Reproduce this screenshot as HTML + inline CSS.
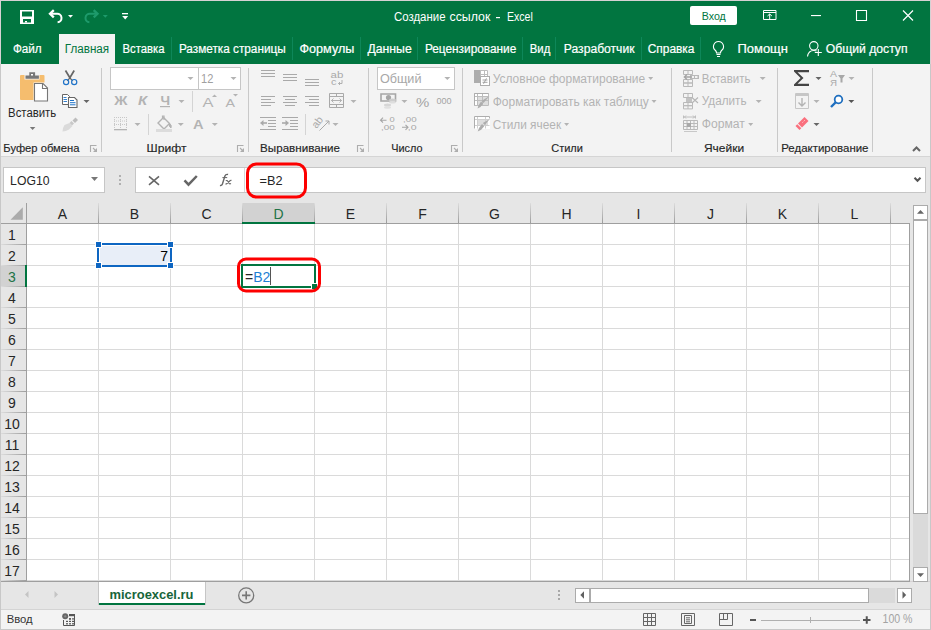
<!DOCTYPE html>
<html><head><meta charset="utf-8"><style>
html,body{margin:0;padding:0;width:931px;height:630px;overflow:hidden;background:#d6d2d4}
svg{display:block;font-family:"Liberation Sans", sans-serif}
</style></head><body>
<svg width="931" height="630" viewBox="0 0 931 630">
<defs><linearGradient id="gv" x1="0" y1="0" x2="0" y2="1"><stop offset="0" stop-color="#dcdcdc"/><stop offset="1" stop-color="#9c9c9c"/></linearGradient><linearGradient id="gh" x1="0" y1="0" x2="1" y2="0"><stop offset="0" stop-color="#dcdcdc"/><stop offset="1" stop-color="#9c9c9c"/></linearGradient></defs>
<rect x="0" y="0" width="931" height="630" fill="#d6d2d4" />
<rect x="0" y="64" width="1" height="566" fill="#c8c8c8" />
<rect x="930" y="64" width="1" height="566" fill="#c8c8c8" />
<rect x="0" y="629" width="931" height="1" fill="#c8c8c8" />
<rect x="1" y="1" width="929" height="63" fill="#017540" />
<rect x="20" y="10" width="14" height="14" fill="#fff" />
<rect x="22" y="11.5" width="10" height="5" fill="#017540" />
<rect x="23" y="19" width="8" height="3.5" fill="#017540" />
<rect x="25" y="21" width="2" height="1.5" fill="#fff" />
<path d="M50.5 13.8h6.5a4.2 4.2 0 0 1 0.6 8.4" fill="none" stroke="#fff" stroke-width="2" />
<path d="M53.8 10.2l-3.8 3.6 3.8 3.6" fill="none" stroke="#fff" stroke-width="2.3" />
<path d="M68.0 14.9L73.0 14.9L70.5 17.7Z" fill="#fff" stroke="none" stroke-width="1" />
<path d="M97 13.8h-7a4.2 4.2 0 0 0-0.6 8.4" fill="none" stroke="#1e9a6b" stroke-width="2" />
<path d="M93.7 10.2l3.8 3.6-3.8 3.6" fill="none" stroke="#1e9a6b" stroke-width="2.3" />
<path d="M102.8 14.9L107.8 14.9L105.3 17.7Z" fill="#1e9a6b" stroke="none" stroke-width="1" />
<rect x="122" y="13" width="6" height="1.3" fill="#fff" />
<path d="M122.2 16.1L128.2 16.1L125.2 19.5Z" fill="#fff" stroke="none" stroke-width="1" />
<text x="394.0" y="20.8" font-size="12" fill="#fff" font-weight="normal" textLength="51.5" lengthAdjust="spacingAndGlyphs" >Создание</text>
<text x="449.5" y="20.8" font-size="12" fill="#fff" font-weight="normal" textLength="40.80000000000001" lengthAdjust="spacingAndGlyphs" >ссылок</text>
<rect x="496" y="17" width="4" height="1.2" fill="#fff" />
<text x="507.0" y="20.8" font-size="12" fill="#fff" font-weight="normal" textLength="25.799999999999955" lengthAdjust="spacingAndGlyphs" >Excel</text>
<rect x="690" y="6" width="47" height="19" fill="#fff" rx="2"/>
<text x="701.8" y="20.3" font-size="11.5" fill="#017540" font-weight="normal" textLength="24.0" lengthAdjust="spacingAndGlyphs" >Вход</text>
<path d="M763.5 10.5h12.5v9h-12.5z M763.5 12.5h12.5" fill="none" stroke="#fff" stroke-width="1" />
<path d="M769.7 19.5v-5.5 M767.5 16l2.2-2 2.2 2" fill="none" stroke="#fff" stroke-width="1" />
<rect x="811" y="15" width="10" height="1.1" fill="#fff" />
<path d="M856.5 10.5h10v10h-10z" fill="none" stroke="#fff" stroke-width="1.1" />
<path d="M903 10.5l10 10 M913 10.5l-10 10" fill="none" stroke="#fff" stroke-width="1.2" />
<rect x="59" y="34" width="56" height="31" fill="#f3f3f3" />
<text x="12.9" y="53" font-size="12" fill="#fff" font-weight="normal" textLength="28.800000000000004" lengthAdjust="spacingAndGlyphs" stroke="#fff" stroke-width="0.2">Файл</text>
<text x="64.8" y="53" font-size="12" fill="#017540" font-weight="normal" textLength="44.3" lengthAdjust="spacingAndGlyphs" >Главная</text>
<text x="122.5" y="53" font-size="12" fill="#fff" font-weight="normal" textLength="42" lengthAdjust="spacingAndGlyphs" stroke="#fff" stroke-width="0.2">Вставка</text>
<text x="178.9" y="53" font-size="12" fill="#fff" font-weight="normal" textLength="106.79999999999998" lengthAdjust="spacingAndGlyphs" stroke="#fff" stroke-width="0.2">Разметка страницы</text>
<text x="299.5" y="53" font-size="12" fill="#fff" font-weight="normal" textLength="54.80000000000001" lengthAdjust="spacingAndGlyphs" stroke="#fff" stroke-width="0.2">Формулы</text>
<text x="367.5" y="53" font-size="12" fill="#fff" font-weight="normal" textLength="44.19999999999999" lengthAdjust="spacingAndGlyphs" stroke="#fff" stroke-width="0.2">Данные</text>
<text x="424.9" y="53" font-size="12" fill="#fff" font-weight="normal" textLength="91.39999999999998" lengthAdjust="spacingAndGlyphs" stroke="#fff" stroke-width="0.2">Рецензирование</text>
<text x="529.8" y="53" font-size="12" fill="#fff" font-weight="normal" textLength="20.5" lengthAdjust="spacingAndGlyphs" stroke="#fff" stroke-width="0.2">Вид</text>
<text x="563.8" y="53" font-size="12" fill="#fff" font-weight="normal" textLength="70.70000000000005" lengthAdjust="spacingAndGlyphs" stroke="#fff" stroke-width="0.2">Разработчик</text>
<text x="647.7" y="53" font-size="12" fill="#fff" font-weight="normal" textLength="46.799999999999955" lengthAdjust="spacingAndGlyphs" stroke="#fff" stroke-width="0.2">Справка</text>
<text x="737.5" y="53" font-size="12" fill="#fff" font-weight="normal" textLength="50.39999999999998" lengthAdjust="spacingAndGlyphs" stroke="#fff" stroke-width="0.2">Помощн</text>
<text x="825.8" y="53" font-size="12" fill="#fff" font-weight="normal" textLength="81.70000000000005" lengthAdjust="spacingAndGlyphs" stroke="#fff" stroke-width="0.2">Общий доступ</text>
<rect x="171" y="37" width="1" height="23" fill="#0e8759" />
<rect x="292" y="37" width="1" height="23" fill="#0e8759" />
<rect x="360" y="37" width="1" height="23" fill="#0e8759" />
<rect x="417" y="37" width="1" height="23" fill="#0e8759" />
<rect x="522" y="37" width="1" height="23" fill="#0e8759" />
<rect x="555" y="37" width="1" height="23" fill="#0e8759" />
<rect x="641" y="37" width="1" height="23" fill="#0e8759" />
<rect x="700" y="37" width="1" height="23" fill="#0e8759" />
<path d="M718.5 41.5a5 5 0 0 0-3 9c1 1 1 2 1 2.5h4c0-0.5 0-1.5 1-2.5a5 5 0 0 0-3-9z M716.5 54.5h4 M717 56.5h3" fill="none" stroke="#fff" stroke-width="1.1" />
<circle cx="813.8" cy="45.8" r="4.2" fill="none" stroke="#fff" stroke-width="1.1"/>
<path d="M807.5 56.5c0.5-3.5 3-6 6.3-6 1.2 0 2 0.2 2.8 0.6" fill="none" stroke="#fff" stroke-width="1.1" />
<path d="M814.8 52.5h7 M818.3 49v7" fill="none" stroke="#fff" stroke-width="1.1" />
<rect x="1" y="64" width="929" height="92" fill="#f3f3f3" />
<rect x="1" y="156" width="929" height="1" fill="#d5d5d5" />
<rect x="101" y="68" width="1" height="84" fill="#c9c9c9" />
<rect x="248" y="68" width="1" height="84" fill="#c9c9c9" />
<rect x="368" y="68" width="1" height="84" fill="#c9c9c9" />
<rect x="462" y="68" width="1" height="84" fill="#c9c9c9" />
<rect x="671" y="68" width="1" height="84" fill="#c9c9c9" />
<rect x="777" y="68" width="1" height="84" fill="#c9c9c9" />
<rect x="872" y="68" width="1" height="84" fill="#c9c9c9" />
<text x="3.3" y="152" font-size="11.3" fill="#262626" font-weight="normal" textLength="76.2" lengthAdjust="spacingAndGlyphs" stroke="#262626" stroke-width="0.15">Буфер обмена</text>
<text x="146.5" y="152" font-size="11.3" fill="#262626" font-weight="normal" textLength="40" lengthAdjust="spacingAndGlyphs" stroke="#262626" stroke-width="0.15">Шрифт</text>
<text x="260.1" y="152" font-size="11.3" fill="#262626" font-weight="normal" textLength="79.89999999999998" lengthAdjust="spacingAndGlyphs" stroke="#262626" stroke-width="0.15">Выравнивание</text>
<text x="391.2" y="152" font-size="11.3" fill="#262626" font-weight="normal" textLength="31.30000000000001" lengthAdjust="spacingAndGlyphs" stroke="#262626" stroke-width="0.15">Число</text>
<text x="551.2" y="152" font-size="11.3" fill="#262626" font-weight="normal" textLength="31.699999999999932" lengthAdjust="spacingAndGlyphs" stroke="#262626" stroke-width="0.15">Стили</text>
<text x="703.9" y="152" font-size="11.3" fill="#262626" font-weight="normal" textLength="40.200000000000045" lengthAdjust="spacingAndGlyphs" stroke="#262626" stroke-width="0.15">Ячейки</text>
<text x="781.2" y="152" font-size="11.3" fill="#262626" font-weight="normal" textLength="87.29999999999995" lengthAdjust="spacingAndGlyphs" stroke="#262626" stroke-width="0.15">Редактирование</text>
<path d="M90.5 152v-6.5h6" fill="none" stroke="#adadad" stroke-width="1.1" />
<path d="M93 148l3.5 3.5" fill="none" stroke="#adadad" stroke-width="1.1" />
<path d="M97 148v4h-4z" fill="#adadad" stroke="none" stroke-width="1" />
<path d="M237.5 152v-6.5h6" fill="none" stroke="#adadad" stroke-width="1.1" />
<path d="M240 148l3.5 3.5" fill="none" stroke="#adadad" stroke-width="1.1" />
<path d="M244 148v4h-4z" fill="#adadad" stroke="none" stroke-width="1" />
<path d="M357.5 152v-6.5h6" fill="none" stroke="#adadad" stroke-width="1.1" />
<path d="M360 148l3.5 3.5" fill="none" stroke="#adadad" stroke-width="1.1" />
<path d="M364 148v4h-4z" fill="#adadad" stroke="none" stroke-width="1" />
<path d="M451.5 152v-6.5h6" fill="none" stroke="#adadad" stroke-width="1.1" />
<path d="M454 148l3.5 3.5" fill="none" stroke="#adadad" stroke-width="1.1" />
<path d="M458 148v4h-4z" fill="#adadad" stroke="none" stroke-width="1" />
<path d="M913 151l3.5-3.5 3.5 3.5" fill="none" stroke="#666" stroke-width="2" />
<rect x="20" y="75" width="24.5" height="25" fill="#f5bd6e" rx="1"/>
<rect x="24.5" y="74" width="15" height="5.5" fill="#f3f3f3" />
<path d="M25.5 75.5h3.8v-3.3h5.8v3.3h3.8v3.3h-13.4z" fill="#777" stroke="none" stroke-width="1" />
<rect x="31" y="74" width="2" height="1.5" fill="#fff" />
<rect x="33.5" y="82.5" width="15" height="19.5" fill="#f3f3f3" />
<path d="M34.5 83.5h8.5l4.5 4.5v13h-13z" fill="#fff" stroke="#777" stroke-width="1.1" />
<path d="M42.5 83.5v5h5" fill="none" stroke="#777" stroke-width="1.1" />
<text x="8.1" y="117" font-size="12" fill="#262626" font-weight="normal" textLength="48.1" lengthAdjust="spacingAndGlyphs" >Вставить</text>
<path d="M29.85 127.0L35.35 127.0L32.6 130.0Z" fill="#777" stroke="none" stroke-width="1" />
<path d="M65.5 70.5l3 5 1.5 2.5 M74.2 70.5l-3 5-1.5 2.5" fill="none" stroke="#666" stroke-width="1.7" />
<path d="M69.9 78l-2.8 2.8 M69.9 78l2.8 2.8" fill="none" stroke="#666" stroke-width="1.2" />
<circle cx="66.1" cy="82.1" r="2.6" fill="none" stroke="#1f73c8" stroke-width="1.2"/>
<circle cx="74.2" cy="82.1" r="2.6" fill="none" stroke="#1f73c8" stroke-width="1.2"/>
<path d="M62.5 94.5h5l2 2v8h-7z" fill="#fff" stroke="#666" stroke-width="1" />
<path d="M68.5 97.5h6l2.5 2.5v7.5h-8.5z" fill="#fff" stroke="#666" stroke-width="1.1" />
<path d="M63.5 97.5h3 M63.5 99.5h3.5 M63.5 101.5h3.5" fill="none" stroke="#1f73c8" stroke-width="0.9" />
<path d="M70 100.5h4 M70 102.7h5.5 M70 104.8h5.5" fill="none" stroke="#1f73c8" stroke-width="1" />
<path d="M83.5 99.9L89.5 99.9L86.5 103.1Z" fill="#666" stroke="none" stroke-width="1" />
<path d="M72.5 120.5l3-3 2.5 2.5-3 3z" fill="#bdbdbd" stroke="none" stroke-width="1" />
<path d="M71.5 121l2.5 2.5-2 2-2.5-2.5z" fill="#c8c8c8" stroke="none" stroke-width="1" />
<path d="M69.5 123l3 3-3.5 3.5q-3 2-6.5 2q0-3.5 2-6.5z" fill="#dadada" stroke="none" stroke-width="1" />
<rect x="110" y="67" width="88" height="22" fill="#fff" stroke="#c6c6c6" stroke-width="1" transform="translate(0.5 0.5)"/>
<rect x="198" y="67" width="42" height="22" fill="#fff" stroke="#c6c6c6" stroke-width="1" transform="translate(0.5 0.5)"/>
<path d="M187.5 76.9L193.5 76.9L190.5 80.1Z" fill="#b3b3b3" stroke="none" stroke-width="1" />
<path d="M230.5 76.9L236.5 76.9L233.5 80.1Z" fill="#b3b3b3" stroke="none" stroke-width="1" />
<text x="201.0" y="83" font-size="12" fill="#a0a0a0" font-weight="normal" textLength="12.300000000000011" lengthAdjust="spacingAndGlyphs" >12</text>
<text x="114.3" y="104.8" font-size="12" fill="#b3b3b3" font-weight="bold" textLength="13.200000000000003" lengthAdjust="spacingAndGlyphs" >Ж</text>
<text x="138.0" y="104.8" font-size="12" fill="#b3b3b3" font-weight="bold" textLength="9.199999999999989" lengthAdjust="spacingAndGlyphs" font-style="italic">К</text>
<text x="160.5" y="104.8" font-size="12" fill="#b3b3b3" font-weight="bold" textLength="9.599999999999994" lengthAdjust="spacingAndGlyphs" >Ч</text>
<rect x="160" y="106" width="10" height="1.2" fill="#b3b3b3" />
<path d="M178.5 99.9L184.5 99.9L181.5 103.1Z" fill="#b3b3b3" stroke="none" stroke-width="1" />
<rect x="192" y="91" width="1" height="21" fill="#d4d4d4" />
<text x="202.5" y="107" font-size="13.5" fill="#b3b3b3" font-weight="normal" textLength="11" lengthAdjust="spacingAndGlyphs" >A</text>
<path d="M212 97l2.5-2.5 2.5 2.5z" fill="#b3b3b3" stroke="none" stroke-width="1" />
<text x="225.5" y="107" font-size="11" fill="#b3b3b3" font-weight="normal" textLength="9.5" lengthAdjust="spacingAndGlyphs" >A</text>
<path d="M233 94h5l-2.5 2.5z" fill="#b3b3b3" stroke="none" stroke-width="1" />
<path d="M114 117.5h13 M114 121h13 M114 124.5h13 M114.5 117v11 M120.5 117v11 M126.5 117v11" fill="none" stroke="#c8c8c8" stroke-width="1" stroke-dasharray="1 1"/>
<rect x="114" y="129" width="13" height="1.3" fill="#b3b3b3" />
<path d="M134.5 122.9L140.5 122.9L137.5 126.1Z" fill="#b3b3b3" stroke="none" stroke-width="1" />
<rect x="148" y="114" width="1" height="21" fill="#d4d4d4" />
<path d="M158 123l5.5-5.5 6 6-5.5 5.5z" fill="none" stroke="#b3b3b3" stroke-width="1.4" />
<path d="M162.5 118.5v-2.5h1.5v4" fill="none" stroke="#b3b3b3" stroke-width="1.2" />
<path d="M169.5 123.5q2.5 1.5 1.5 4.5l-1.5-1.5z" fill="#b3b3b3" stroke="#b3b3b3" stroke-width="1" />
<rect x="156" y="129" width="16" height="3" fill="#dcdcdc" />
<path d="M177.8 122.9L183.8 122.9L180.8 126.1Z" fill="#b3b3b3" stroke="none" stroke-width="1" />
<text x="192.9" y="128.5" font-size="13.5" fill="#b3b3b3" font-weight="bold" textLength="10.599999999999994" lengthAdjust="spacingAndGlyphs" >A</text>
<path d="M211.8 122.9L217.8 122.9L214.8 126.1Z" fill="#b3b3b3" stroke="none" stroke-width="1" />
<rect x="261" y="70" width="14" height="1" fill="#a9a9a9" />
<rect x="261" y="73" width="14" height="1" fill="#a9a9a9" />
<rect x="261" y="76" width="14" height="1" fill="#a9a9a9" />
<rect x="283" y="74" width="14" height="1" fill="#a9a9a9" />
<rect x="283" y="77" width="14" height="1" fill="#a9a9a9" />
<rect x="283" y="80" width="14" height="1" fill="#a9a9a9" />
<rect x="305" y="79" width="14" height="1" fill="#a9a9a9" />
<rect x="305" y="82" width="14" height="1" fill="#a9a9a9" />
<rect x="305" y="85" width="14" height="1" fill="#a9a9a9" />
<text x="330.5" y="77.8" font-size="9.5" fill="#a9a9a9" font-weight="normal" textLength="12.800000000000011" lengthAdjust="spacingAndGlyphs" >ab</text>
<text x="330.9" y="85" font-size="9.5" fill="#a9a9a9" font-weight="normal" textLength="5.5" lengthAdjust="spacingAndGlyphs" >c</text>
<path d="M342 80v3.5h-3.5 M340 82l-1.5 1.5 1.5 1.5" fill="none" stroke="#a9a9a9" stroke-width="0.9" />
<rect x="261" y="96" width="14" height="1" fill="#a9a9a9" />
<rect x="283" y="96" width="14" height="1" fill="#a9a9a9" />
<rect x="305" y="96" width="14" height="1" fill="#a9a9a9" />
<rect x="261" y="99" width="10" height="1" fill="#a9a9a9" />
<rect x="285" y="99" width="10" height="1" fill="#a9a9a9" />
<rect x="309" y="99" width="10" height="1" fill="#a9a9a9" />
<rect x="261" y="102" width="14" height="1" fill="#a9a9a9" />
<rect x="283" y="102" width="14" height="1" fill="#a9a9a9" />
<rect x="305" y="102" width="14" height="1" fill="#a9a9a9" />
<rect x="261" y="105" width="10" height="1" fill="#a9a9a9" />
<rect x="285" y="105" width="10" height="1" fill="#a9a9a9" />
<rect x="309" y="105" width="10" height="1" fill="#a9a9a9" />
<path d="M329.5 93.5h14v14h-14z M329.5 96.5h14 M329.5 104.5h14 M336.5 93.5v3 M336.5 104.5v3" fill="none" stroke="#a9a9a9" stroke-width="1" />
<path d="M331.5 100.5h10 M333.5 98.5l-2 2 2 2 M339.5 98.5l2 2-2 2" fill="none" stroke="#a9a9a9" stroke-width="0.9" />
<path d="M350.5 99.9L356.5 99.9L353.5 103.1Z" fill="#b3b3b3" stroke="none" stroke-width="1" />
<rect x="260" y="117" width="16" height="1" fill="#a9a9a9" />
<rect x="260" y="129" width="16" height="1" fill="#a9a9a9" />
<rect x="268" y="120" width="8" height="1" fill="#a9a9a9" />
<rect x="268" y="123" width="8" height="1" fill="#a9a9a9" />
<rect x="268" y="126" width="8" height="1" fill="#a9a9a9" />
<path d="M267 123h-5" fill="none" stroke="#a9a9a9" stroke-width="1.6" />
<path d="M263.5 120l-3.5 3 3.5 3z" fill="#a9a9a9" stroke="none" stroke-width="1" />
<rect x="282" y="117" width="16" height="1" fill="#a9a9a9" />
<rect x="282" y="129" width="16" height="1" fill="#a9a9a9" />
<rect x="290" y="120" width="8" height="1" fill="#a9a9a9" />
<rect x="290" y="123" width="8" height="1" fill="#a9a9a9" />
<rect x="290" y="126" width="8" height="1" fill="#a9a9a9" />
<path d="M282 123h5" fill="none" stroke="#a9a9a9" stroke-width="1.6" />
<path d="M285.5 120l3.5 3-3.5 3z" fill="#a9a9a9" stroke="none" stroke-width="1" />
<rect x="305" y="114" width="1" height="21" fill="#d4d4d4" />
<text x="0" y="0" font-size="10.5" fill="#a9a9a9" transform="translate(316.5 129) rotate(-52)">ab</text>
<path d="M319.5 130.5l9.5-9.5 M325.5 121h3.5v3.5" fill="none" stroke="#a9a9a9" stroke-width="1" />
<path d="M332.5 122.9L338.5 122.9L335.5 126.1Z" fill="#b3b3b3" stroke="none" stroke-width="1" />
<rect x="377" y="67" width="77" height="22" fill="#fff" stroke="#c6c6c6" stroke-width="1" transform="translate(0.5 0.5)"/>
<text x="379.9" y="83" font-size="12" fill="#a8a8a8" font-weight="normal" textLength="41.60000000000002" lengthAdjust="spacingAndGlyphs" >Общий</text>
<path d="M444.3 76.9L450.3 76.9L447.3 80.1Z" fill="#b3b3b3" stroke="none" stroke-width="1" />
<path d="M381 94h14.5v7h-14.5z" fill="none" stroke="#a6a6a6" stroke-width="1.6" />
<circle cx="388.5" cy="97.5" r="2.6" fill="#a6a6a6"/>
<ellipse cx="392.5" cy="100" rx="3.5" ry="1.6" fill="#cdcdcd"/>
<ellipse cx="392.5" cy="102.3" rx="3.5" ry="1.2" fill="#dedede"/>
<ellipse cx="387.5" cy="105" rx="3.5" ry="1.5" fill="#d6d6d6"/>
<ellipse cx="387.5" cy="107.5" rx="3.5" ry="1.2" fill="#e0e0e0"/>
<path d="M401.4 99.9L407.4 99.9L404.4 103.1Z" fill="#b3b3b3" stroke="none" stroke-width="1" />
<text x="416.1" y="107.2" font-size="13.5" fill="#a3a3a3" font-weight="normal" textLength="13.299999999999955" lengthAdjust="spacingAndGlyphs" >%</text>
<text x="436.4" y="104" font-size="9.5" fill="#a3a3a3" font-weight="normal" textLength="15.100000000000023" lengthAdjust="spacingAndGlyphs" >000</text>
<text x="389.5" y="122.2" font-size="7.6" fill="#a6a6a6" font-weight="normal" textLength="5.199999999999989" lengthAdjust="spacingAndGlyphs" >0</text>
<text x="381.0" y="129.6" font-size="7.6" fill="#a6a6a6" font-weight="normal" textLength="13.699999999999989" lengthAdjust="spacingAndGlyphs" >,00</text>
<path d="M380.5 120.2h6 M383 117.7l-2.5 2.5 2.5 2.5" fill="none" stroke="#a6a6a6" stroke-width="1.1" />
<text x="403.0" y="122.2" font-size="7.6" fill="#a6a6a6" font-weight="normal" textLength="13.600000000000023" lengthAdjust="spacingAndGlyphs" >,00</text>
<text x="407.8" y="129.6" font-size="7.6" fill="#a6a6a6" font-weight="normal" textLength="8.800000000000011" lengthAdjust="spacingAndGlyphs" >,0</text>
<path d="M402 127.3h6 M405.5 124.8l2.5 2.5-2.5 2.5" fill="none" stroke="#a6a6a6" stroke-width="1.1" />
<rect x="474" y="70" width="14" height="13" fill="#fff" />
<path d="M474.5 70.5h13v12h-13z M480.5 70.5v12 M474.5 74.5h13 M474.5 78.5h13 M484.5 70.5v6" fill="none" stroke="#bdbdbd" stroke-width="1" />
<rect x="474" y="70" width="6" height="13" fill="#adadad" />
<rect x="480.5" y="76.5" width="9" height="9" fill="#fff" stroke="#adadad" stroke-width="1"/>
<path d="M482.5 80h5 M482.5 82.3h5 M486.5 78.3l-3 5.5" fill="none" stroke="#9a9a9a" stroke-width="0.9" />
<text x="492.7" y="83.4" font-size="12" fill="#b3b3b3" font-weight="normal" textLength="152.50000000000006" lengthAdjust="spacingAndGlyphs" >Условное форматирование</text>
<path d="M648.2 77.0L653.2 77.0L650.7 80.0Z" fill="#b3b3b3" stroke="none" stroke-width="1" />
<rect x="474" y="93" width="15" height="13" fill="#fff" />
<rect x="477" y="96" width="11" height="9" fill="#dedede" />
<path d="M474.5 93.5h14v12h-14z M477.5 93.5v12 M474.5 96.5h14 M474.5 100.5h14 M482.5 93.5v12" fill="none" stroke="#bdbdbd" stroke-width="1" />
<path d="M474.5 105.5v-12h14" fill="none" stroke="#adadad" stroke-width="1" />
<path d="M489.5 96l-6 7-2-2z" fill="#adadad" stroke="none" stroke-width="1" />
<path d="M481 101.5l2 2-2.5 3.5-3 1.5 1-3z" fill="#adadad" stroke="none" stroke-width="1" />
<text x="492.7" y="106" font-size="12" fill="#b3b3b3" font-weight="normal" textLength="156.09999999999997" lengthAdjust="spacingAndGlyphs" >Форматировать как таблицу</text>
<path d="M651.5 100.0L656.5 100.0L654 103.0Z" fill="#b3b3b3" stroke="none" stroke-width="1" />
<rect x="474" y="116" width="16" height="13" fill="#fff" />
<rect x="478" y="119" width="10" height="6" fill="#dedede" />
<path d="M474.5 119.5h15 M474.5 125.5h15 M477.5 116.5v12 M485.5 116.5v12" fill="none" stroke="#cfcfcf" stroke-width="1" />
<path d="M474.5 128.5v-12h15v2" fill="none" stroke="#adadad" stroke-width="1" />
<path d="M489.8 119l-5 6-2-2z" fill="#adadad" stroke="none" stroke-width="1" />
<path d="M482 124l2.2 2.2-3 3.5-3.5 1.8 1.3-3.5z" fill="#adadad" stroke="none" stroke-width="1" />
<text x="492.7" y="128.9" font-size="12" fill="#b3b3b3" font-weight="normal" textLength="68.40000000000003" lengthAdjust="spacingAndGlyphs" >Стили ячеек</text>
<path d="M564.1 123.0L569.1 123.0L566.6 126.0Z" fill="#b3b3b3" stroke="none" stroke-width="1" />
<path d="M683.5 70.5h9.0v4h-9.0z M688.0 70.5v4" fill="none" stroke="#b9b9b9" stroke-width="1" />
<path d="M683.5 79.5h9.0v3.5h-9.0z M688.0 79.5v3.5" fill="none" stroke="#b9b9b9" stroke-width="1" />
<path d="M683.5 83.0h9.0v3.5h-9.0z M688.0 83.0v3.5" fill="none" stroke="#b9b9b9" stroke-width="1" />
<rect x="690" y="75" width="9" height="4" fill="#b9b9b9" />
<rect x="691.5" y="76" width="2.5" height="2" fill="#f3f3f3" />
<rect x="695" y="76" width="2.5" height="2" fill="#f3f3f3" />
<path d="M692 77h-8 M687 74.5l-2.7 2.5 2.7 2.5" fill="none" stroke="#a5a5a5" stroke-width="1.3" />
<text x="701.8" y="82.7" font-size="12" fill="#b3b3b3" font-weight="normal" textLength="48.700000000000045" lengthAdjust="spacingAndGlyphs" >Вставить</text>
<path d="M759.7 76.9L765.7 76.9L762.7 80.1Z" fill="#b3b3b3" stroke="none" stroke-width="1" />
<path d="M683.5 93.5h9.0v4h-9.0z M688.0 93.5v4" fill="none" stroke="#b9b9b9" stroke-width="1" />
<rect x="686" y="98" width="6" height="4" fill="#c2c2c2" />
<path d="M683.5 102.5h9.0v3.2h-9.0z M688.0 102.5v3.2" fill="none" stroke="#b9b9b9" stroke-width="1" />
<path d="M683.5 105.7h9.0v3.2h-9.0z M688.0 105.7v3.2" fill="none" stroke="#b9b9b9" stroke-width="1" />
<path d="M692 97.5l6 5.5 M698 97.5l-6 5.5" fill="none" stroke="#b5b5b5" stroke-width="1.1" />
<text x="701.8" y="105.2" font-size="12" fill="#b3b3b3" font-weight="normal" textLength="44.700000000000045" lengthAdjust="spacingAndGlyphs" >Удалить</text>
<path d="M755.7 99.9L761.7 99.9L758.7 103.1Z" fill="#b3b3b3" stroke="none" stroke-width="1" />
<path d="M683.5 120.5h14v9h-14z M683.5 123.5h14 M683.5 126.5h14 M687 120.5v9 M690.5 120.5v9 M694 120.5v9" fill="none" stroke="#b9b9b9" stroke-width="1" />
<rect x="687" y="123" width="4" height="4" fill="#a9a9a9" />
<path d="M684 131.5h13" fill="none" stroke="#c8c8c8" stroke-width="1" />
<path d="M683.5 115.5v3 M695.5 115.5v3 M684 117h11 M686 115.5l-1.5 1.5 1.5 1.5 M693 115.5l1.5 1.5-1.5 1.5" fill="none" stroke="#b9b9b9" stroke-width="0.9" />
<text x="701.8" y="128.3" font-size="12" fill="#b3b3b3" font-weight="normal" textLength="43.10000000000002" lengthAdjust="spacingAndGlyphs" >Формат</text>
<path d="M748.2 123.0L753.2 123.0L750.7 126.0Z" fill="#b3b3b3" stroke="none" stroke-width="1" />
<path d="M794 70h15v2.2h-11.5l6 5.8-6 5.8h11.5v2.2h-15v-1.6l6.6-6.4-6.6-6.4z" fill="#444" stroke="none" stroke-width="1" />
<path d="M815.5 76.9L821.5 76.9L818.5 80.1Z" fill="#666" stroke="none" stroke-width="1" />
<text x="830.0" y="77" font-size="8.5" fill="#a8a8a8" font-weight="normal" textLength="7.0" lengthAdjust="spacingAndGlyphs" >А</text>
<text x="830.0" y="86" font-size="8.5" fill="#a8a8a8" font-weight="normal" textLength="7.0" lengthAdjust="spacingAndGlyphs" >Я</text>
<path d="M838 75h7l-2.5 3.5v4h-2v-4z" fill="#a8a8a8" stroke="none" stroke-width="1" />
<path d="M848.5 76.9L854.5 76.9L851.5 80.1Z" fill="#b3b3b3" stroke="none" stroke-width="1" />
<path d="M795.5 93.5h13v15h-13z" fill="none" stroke="#c6c6c6" stroke-width="1" />
<rect x="796" y="94" width="12" height="2" fill="#c6c6c6" />
<path d="M802 98v8 M798.5 102.5l3.5 3.5 3.5-3.5" fill="none" stroke="#b3b3b3" stroke-width="1.4" />
<path d="M813.5 99.9L819.5 99.9L816.5 103.1Z" fill="#b3b3b3" stroke="none" stroke-width="1" />
<circle cx="838.5" cy="99.5" r="3.8" fill="#fff" stroke="#1f6fbf" stroke-width="1.8"/>
<path d="M836 102l-5 5" fill="none" stroke="#1f6fbf" stroke-width="2.4" />
<path d="M848.3 99.9L854.3 99.9L851.3 103.1Z" fill="#555" stroke="none" stroke-width="1" />
<path d="M798 123.5l6.5-6.5 4 4-6.5 6.5z" fill="#fa6f7d" stroke="none" stroke-width="1" />
<path d="M802.5 122.5l2.5-2.5" fill="none" stroke="#fff" stroke-width="0.8" stroke-dasharray="1 1"/>
<path d="M795.5 126l1.8-1.8 4 4-1.8 1.8z" fill="#fa6f7d" stroke="none" stroke-width="1" />
<path d="M813.5 122.9L819.5 122.9L816.5 126.1Z" fill="#666" stroke="none" stroke-width="1" />
<rect x="1" y="157" width="929" height="46" fill="#e6e6e6" />
<rect x="3" y="167" width="101" height="25" fill="#fff" stroke="#c6c6c6" stroke-width="1" transform="translate(0.5 0.5)"/>
<text x="10.1" y="185.2" font-size="13" fill="#262626" font-weight="normal" textLength="39.4" lengthAdjust="spacingAndGlyphs" >LOG10</text>
<path d="M91.0 177.0L98.0 177.0L94.5 181.0Z" fill="#777" stroke="none" stroke-width="1" />
<rect x="119" y="175" width="2" height="2" fill="#b0b0b0" />
<rect x="119" y="179" width="2" height="2" fill="#b0b0b0" />
<rect x="119" y="183" width="2" height="2" fill="#b0b0b0" />
<rect x="135" y="167" width="790" height="25" fill="#fff" stroke="#c6c6c6" stroke-width="1" transform="translate(0.5 0.5)"/>
<rect x="244" y="168" width="1" height="24" fill="#d8d8d8" />
<path d="M149 176.3l10 8.6 M159 176.3l-10 8.6" fill="none" stroke="#666" stroke-width="1.6" />
<path d="M184.5 180.3l4 4.3 8.3-8.6" fill="none" stroke="#666" stroke-width="2.5" />
<path d="M220 185.3q1.6 0.7 2.5-1.6l2.4-7.6q0.9-2.2 3.2-1.6" fill="none" stroke="#666" stroke-width="1.4" />
<path d="M222.4 177.6h4.8" fill="none" stroke="#666" stroke-width="1" />
<path d="M225.8 180.8q1.2-0.9 2 0.4l1.4 2.2q0.6 0.8 1.8 0.1 M231.6 180.4q-0.6-0.4-1.3 0.1l-3.6 3.2q-0.6 0.4-1.2 0" fill="none" stroke="#666" stroke-width="1.1" />
<text x="259.5" y="185" font-size="13" fill="#262626" font-weight="normal" textLength="23" lengthAdjust="spacingAndGlyphs" >=B2</text>
<path d="M914.5 177.8l3 3 3-3" fill="none" stroke="#555" stroke-width="2" />
<rect x="1" y="203" width="909" height="20" fill="#e6e6e6" />
<rect x="1" y="223" width="26" height="358" fill="#e6e6e6" />
<rect x="27" y="224" width="883" height="357" fill="#fff" />
<rect x="98" y="224" width="1" height="357" fill="#dadada" />
<rect x="170" y="224" width="1" height="357" fill="#dadada" />
<rect x="242" y="224" width="1" height="357" fill="#dadada" />
<rect x="314" y="224" width="1" height="357" fill="#dadada" />
<rect x="386" y="224" width="1" height="357" fill="#dadada" />
<rect x="458" y="224" width="1" height="357" fill="#dadada" />
<rect x="530" y="224" width="1" height="357" fill="#dadada" />
<rect x="602" y="224" width="1" height="357" fill="#dadada" />
<rect x="674" y="224" width="1" height="357" fill="#dadada" />
<rect x="746" y="224" width="1" height="357" fill="#dadada" />
<rect x="818" y="224" width="1" height="357" fill="#dadada" />
<rect x="890" y="224" width="1" height="357" fill="#dadada" />
<rect x="27" y="244" width="883" height="1" fill="#dadada" />
<rect x="27" y="265" width="883" height="1" fill="#dadada" />
<rect x="27" y="286" width="883" height="1" fill="#dadada" />
<rect x="27" y="307" width="883" height="1" fill="#dadada" />
<rect x="27" y="328" width="883" height="1" fill="#dadada" />
<rect x="27" y="349" width="883" height="1" fill="#dadada" />
<rect x="27" y="370" width="883" height="1" fill="#dadada" />
<rect x="27" y="391" width="883" height="1" fill="#dadada" />
<rect x="27" y="412" width="883" height="1" fill="#dadada" />
<rect x="27" y="433" width="883" height="1" fill="#dadada" />
<rect x="27" y="454" width="883" height="1" fill="#dadada" />
<rect x="27" y="475" width="883" height="1" fill="#dadada" />
<rect x="27" y="496" width="883" height="1" fill="#dadada" />
<rect x="27" y="517" width="883" height="1" fill="#dadada" />
<rect x="27" y="538" width="883" height="1" fill="#dadada" />
<rect x="27" y="559" width="883" height="1" fill="#dadada" />
<rect x="27" y="580" width="883" height="1" fill="#dadada" />
<rect x="1" y="244" width="26" height="1" fill="url(#gh)" />
<rect x="1" y="265" width="26" height="1" fill="url(#gh)" />
<rect x="1" y="286" width="26" height="1" fill="url(#gh)" />
<rect x="1" y="307" width="26" height="1" fill="url(#gh)" />
<rect x="1" y="328" width="26" height="1" fill="url(#gh)" />
<rect x="1" y="349" width="26" height="1" fill="url(#gh)" />
<rect x="1" y="370" width="26" height="1" fill="url(#gh)" />
<rect x="1" y="391" width="26" height="1" fill="url(#gh)" />
<rect x="1" y="412" width="26" height="1" fill="url(#gh)" />
<rect x="1" y="433" width="26" height="1" fill="url(#gh)" />
<rect x="1" y="454" width="26" height="1" fill="url(#gh)" />
<rect x="1" y="475" width="26" height="1" fill="url(#gh)" />
<rect x="1" y="496" width="26" height="1" fill="url(#gh)" />
<rect x="1" y="517" width="26" height="1" fill="url(#gh)" />
<rect x="1" y="538" width="26" height="1" fill="url(#gh)" />
<rect x="1" y="559" width="26" height="1" fill="url(#gh)" />
<rect x="1" y="580" width="26" height="1" fill="url(#gh)" />
<rect x="98" y="203" width="1" height="20" fill="url(#gv)" />
<rect x="170" y="203" width="1" height="20" fill="url(#gv)" />
<rect x="242" y="203" width="1" height="20" fill="url(#gv)" />
<rect x="314" y="203" width="1" height="20" fill="url(#gv)" />
<rect x="386" y="203" width="1" height="20" fill="url(#gv)" />
<rect x="458" y="203" width="1" height="20" fill="url(#gv)" />
<rect x="530" y="203" width="1" height="20" fill="url(#gv)" />
<rect x="602" y="203" width="1" height="20" fill="url(#gv)" />
<rect x="674" y="203" width="1" height="20" fill="url(#gv)" />
<rect x="746" y="203" width="1" height="20" fill="url(#gv)" />
<rect x="818" y="203" width="1" height="20" fill="url(#gv)" />
<rect x="890" y="203" width="1" height="20" fill="url(#gv)" />
<rect x="243" y="203" width="71" height="20" fill="#d2d2d2" />
<rect x="1" y="266" width="25" height="20" fill="#d2d2d2" />
<rect x="1" y="223" width="909" height="1" fill="#9f9f9f" />
<rect x="26" y="203" width="1" height="379" fill="#9f9f9f" />
<rect x="242" y="222" width="73" height="2" fill="#017540" />
<rect x="25" y="265" width="2" height="22" fill="#017540" />
<rect x="909" y="223" width="1" height="359" fill="#9f9f9f" />
<rect x="1" y="581" width="909" height="1" fill="#9f9f9f" />
<path d="M10.5 219.8h12.3v-12.5z" fill="#ababab" stroke="none" stroke-width="1" />
<text x="62.5" y="219" font-size="14" fill="#262626" text-anchor="middle">A</text>
<text x="134.5" y="219" font-size="14" fill="#262626" text-anchor="middle">B</text>
<text x="206.5" y="219" font-size="14" fill="#262626" text-anchor="middle">C</text>
<text x="278.5" y="219" font-size="14" fill="#217346" text-anchor="middle">D</text>
<text x="350.5" y="219" font-size="14" fill="#262626" text-anchor="middle">E</text>
<text x="422.5" y="219" font-size="14" fill="#262626" text-anchor="middle">F</text>
<text x="494.5" y="219" font-size="14" fill="#262626" text-anchor="middle">G</text>
<text x="566.5" y="219" font-size="14" fill="#262626" text-anchor="middle">H</text>
<text x="638.5" y="219" font-size="14" fill="#262626" text-anchor="middle">I</text>
<text x="710.5" y="219" font-size="14" fill="#262626" text-anchor="middle">J</text>
<text x="782.5" y="219" font-size="14" fill="#262626" text-anchor="middle">K</text>
<text x="854.5" y="219" font-size="14" fill="#262626" text-anchor="middle">L</text>
<text x="12" y="240" font-size="14" fill="#262626" text-anchor="middle">1</text>
<text x="12" y="261" font-size="14" fill="#262626" text-anchor="middle">2</text>
<text x="12" y="282" font-size="14" fill="#217346" text-anchor="middle">3</text>
<text x="12" y="303" font-size="14" fill="#262626" text-anchor="middle">4</text>
<text x="12" y="324" font-size="14" fill="#262626" text-anchor="middle">5</text>
<text x="12" y="345" font-size="14" fill="#262626" text-anchor="middle">6</text>
<text x="12" y="366" font-size="14" fill="#262626" text-anchor="middle">7</text>
<text x="12" y="387" font-size="14" fill="#262626" text-anchor="middle">8</text>
<text x="12" y="408" font-size="14" fill="#262626" text-anchor="middle">9</text>
<text x="12" y="429" font-size="14" fill="#262626" text-anchor="middle">10</text>
<text x="12" y="450" font-size="14" fill="#262626" text-anchor="middle">11</text>
<text x="12" y="471" font-size="14" fill="#262626" text-anchor="middle">12</text>
<text x="12" y="492" font-size="14" fill="#262626" text-anchor="middle">13</text>
<text x="12" y="513" font-size="14" fill="#262626" text-anchor="middle">14</text>
<text x="12" y="534" font-size="14" fill="#262626" text-anchor="middle">15</text>
<text x="12" y="555" font-size="14" fill="#262626" text-anchor="middle">16</text>
<text x="12" y="576" font-size="14" fill="#262626" text-anchor="middle">17</text>
<rect x="100" y="246" width="70" height="19" fill="#e8eef8" />
<rect x="97" y="243" width="75" height="2" fill="#0e66c2" />
<rect x="97" y="265" width="75" height="2" fill="#0e66c2" />
<rect x="97" y="243" width="2" height="24" fill="#0e66c2" />
<rect x="170" y="243" width="2" height="24" fill="#0e66c2" />
<rect x="95" y="241" width="7" height="7" fill="#fff" />
<rect x="96" y="242" width="5" height="5" fill="#0e66c2" />
<rect x="167" y="241" width="7" height="7" fill="#fff" />
<rect x="168" y="242" width="5" height="5" fill="#0e66c2" />
<rect x="95" y="262" width="7" height="7" fill="#fff" />
<rect x="96" y="263" width="5" height="5" fill="#0e66c2" />
<rect x="167" y="262" width="7" height="7" fill="#fff" />
<rect x="168" y="263" width="5" height="5" fill="#0e66c2" />
<text x="168" y="261" font-size="14" fill="#000" text-anchor="end">7</text>
<rect x="241" y="264" width="75" height="2" fill="#017540" />
<rect x="241" y="286" width="75" height="2" fill="#017540" />
<rect x="241" y="264" width="2" height="24" fill="#017540" />
<rect x="314" y="264" width="2" height="21" fill="#017540" />
<rect x="311" y="283" width="7" height="7" fill="#fff" />
<rect x="312" y="284" width="5" height="5" fill="#017540" />
<text x="245" y="282" font-size="14" fill="#262626">=<tspan fill="#1f7fd4">B2</tspan></text>
<rect x="270" y="267" width="1" height="18" fill="#555" />
<rect x="247.5" y="164" width="58" height="33" rx="9" fill="none" stroke="#fd0000" stroke-width="3"/>
<rect x="238.5" y="259" width="81" height="32" rx="7.5" fill="none" stroke="#fd0000" stroke-width="3"/>
<rect x="1" y="582" width="929" height="27" fill="#e6e6e6" />
<rect x="910" y="203" width="20" height="378" fill="#e6e6e6" />
<rect x="913" y="220" width="15" height="347" fill="#dadada" />
<rect x="913" y="205" width="14" height="14" fill="#fff" stroke="#ababab" stroke-width="1" transform="translate(0.5 0.5)"/>
<path d="M917 213.8h7l-3.5-3.8z" fill="#666" stroke="none" stroke-width="1" />
<rect x="913" y="220" width="14" height="293" fill="#fff" stroke="#ababab" stroke-width="1" transform="translate(0.5 0.5)"/>
<rect x="913" y="567" width="14" height="14" fill="#fff" stroke="#ababab" stroke-width="1" transform="translate(0.5 0.5)"/>
<path d="M917 573.2h7l-3.5 3.7z" fill="#666" stroke="none" stroke-width="1" />
<path d="M28.5 591v7l-3.5-3.5z" fill="#c4c4c4" stroke="none" stroke-width="1" />
<path d="M54.5 591v7l3.5-3.5z" fill="#c4c4c4" stroke="none" stroke-width="1" />
<rect x="98" y="582" width="108" height="23" fill="#c6c6c6" />
<rect x="99" y="582" width="106" height="23" fill="#fff" />
<rect x="99" y="603" width="106" height="2" fill="#017540" />
<text x="109.5" y="599" font-size="13" fill="#17653a" font-weight="bold" textLength="83.9" lengthAdjust="spacingAndGlyphs" >microexcel.ru</text>
<circle cx="246.2" cy="595.4" r="7.5" fill="none" stroke="#777" stroke-width="1.3"/>
<path d="M242 595.4h8.4 M246.2 591.2v8.4" fill="none" stroke="#777" stroke-width="1.6" />
<rect x="558" y="590" width="2" height="2" fill="#a8a8a8" />
<rect x="558" y="594" width="2" height="2" fill="#a8a8a8" />
<rect x="558" y="598" width="2" height="2" fill="#a8a8a8" />
<rect x="575" y="588" width="14" height="14" fill="#fff" stroke="#ababab" stroke-width="1" transform="translate(0.5 0.5)"/>
<path d="M584 591.3v7.4l-3.7-3.7z" fill="#606060" stroke="none" stroke-width="1" />
<rect x="590" y="588" width="278" height="14" fill="#fff" stroke="#ababab" stroke-width="1" transform="translate(0.5 0.5)"/>
<rect x="869" y="588" width="26" height="15" fill="#dadada" />
<rect x="897" y="588" width="14" height="14" fill="#fff" stroke="#ababab" stroke-width="1" transform="translate(0.5 0.5)"/>
<path d="M902.5 591.3v7.4l3.7-3.7z" fill="#606060" stroke="none" stroke-width="1" />
<rect x="1" y="609" width="929" height="1" fill="#d4d4d4" />
<rect x="1" y="610" width="929" height="19" fill="#f3f3f3" />
<text x="6.7" y="623" font-size="11" fill="#333" font-weight="normal" textLength="26.000000000000004" lengthAdjust="spacingAndGlyphs" >Ввод</text>
<path d="M63.5 620v5.5h11v-11h-5" fill="none" stroke="#555" stroke-width="1" />
<rect x="69" y="614" width="6" height="2.2" fill="#555" />
<circle cx="65.2" cy="616.3" r="3" fill="#666"/>
<path d="M64 616.3h2.5 M65.2 615v2.6" fill="none" stroke="#999" stroke-width="0.7" />
<rect x="69" y="618.3" width="2" height="1.2" fill="#555" />
<rect x="69" y="618.3" width="2" height="1.2" fill="#555" />
<rect x="72" y="618.3" width="2" height="1.2" fill="#555" />
<rect x="66" y="620.8" width="2" height="1.2" fill="#555" />
<rect x="69" y="620.8" width="2" height="1.2" fill="#555" />
<rect x="72" y="620.8" width="2" height="1.2" fill="#555" />
<rect x="66" y="623.2" width="2" height="1.2" fill="#555" />
<rect x="69" y="623.2" width="2" height="1.2" fill="#555" />
<rect x="72" y="623.2" width="2" height="1.2" fill="#555" />
<path d="M643.5 613.5h12v12h-12z M643.5 617.5h12 M643.5 621.5h12 M647.5 613.5v12 M651.5 613.5v12" fill="none" stroke="#666" stroke-width="1" />
<path d="M681.5 613.5h13v12h-13z M684.5 615.5h7v8h-7z M686 617.8h4 M686 619.8h4 M686 621.8h4" fill="none" stroke="#666" stroke-width="1" />
<path d="M719.5 613.5h13v12h-13z M719.5 619.5h8v-6 M723.5 613.5v6" fill="none" stroke="#666" stroke-width="1" />
<rect x="750" y="619" width="6" height="2" fill="#555" />
<rect x="761" y="620" width="99" height="1" fill="#b0b0b0" />
<rect x="810" y="617" width="1" height="6" fill="#b0b0b0" />
<path d="M863 620h7.5 M866.75 616.25v7.5" fill="none" stroke="#555" stroke-width="2" />
<text x="882.5" y="623" font-size="12" fill="#a3a3a3" font-weight="normal" textLength="30" lengthAdjust="spacingAndGlyphs" >100 %</text>
</svg>
</body></html>
